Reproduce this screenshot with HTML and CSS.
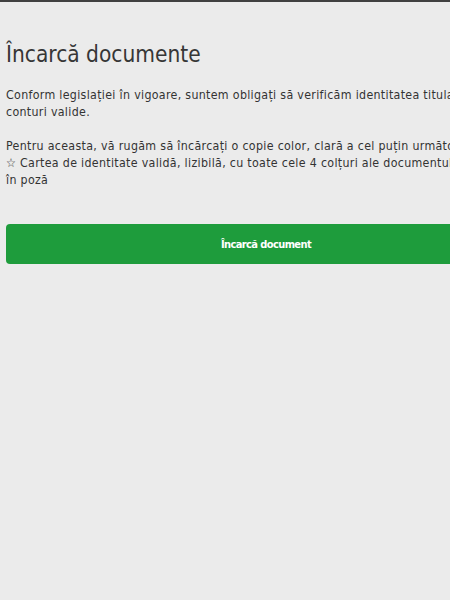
FILE: index.html
```html
<!DOCTYPE html>
<html lang="ro">
<head>
  <meta charset="UTF-8">
  <title>Încarcă documente</title>
  <link rel="stylesheet" href="styles.css">
</head>
<body>
  <!-- conținut pagină -->
  <div class="page">
    <h1 class="page-title">Încarcă documente</h1>

    <p class="text">Conform legislației în vigoare, suntem obligați să verificăm identitatea titularilor de conturi pentru a avea<br>
      conturi valide.</p>

    <p class="text">Pentru aceasta, vă rugăm să încărcați o copie color, clară a cel puțin următorului document:<br>
      ☆ Cartea de identitate validă, lizibilă, cu toate cele 4 colțuri ale documentului vizibile<br>
      în poză</p>

    <button class="upload-button">Încarcă document</button>
  </div>
</body>
</html>
```

FILE: styles.css
```css
body {
  margin: 0;
  background-color: #ebebeb;
  border-top: 2px solid #404040;
  font-family: "DejaVu Sans Condensed", "DejaVu Sans", sans-serif;
  color: #333;
  overflow: hidden;
}

.page {
  width: 520px;
  padding: 0 6px;
}

.page-title {
  font-family: "DejaVu Sans Condensed", "DejaVu Sans", sans-serif;
  font-weight: normal;
  font-size: 22.5px;
  color: #363636;
  margin: 39px 0 20px;
}

.text {
  font-size: 12.3px;
  line-height: 17px;
  letter-spacing: 0.32px;
  margin: 0 0 17px;
  white-space: nowrap;
}

.upload-button {
  display: block;
  width: 100%;
  height: 40px;
  margin-top: 35px;
  border: none;
  border-radius: 4px;
  background-color: #1e9c3c;
  color: #fff;
  font-family: "DejaVu Sans Condensed", "DejaVu Sans", sans-serif;
  font-size: 11px;
  font-weight: bold;
  letter-spacing: -0.6px;
}
```
